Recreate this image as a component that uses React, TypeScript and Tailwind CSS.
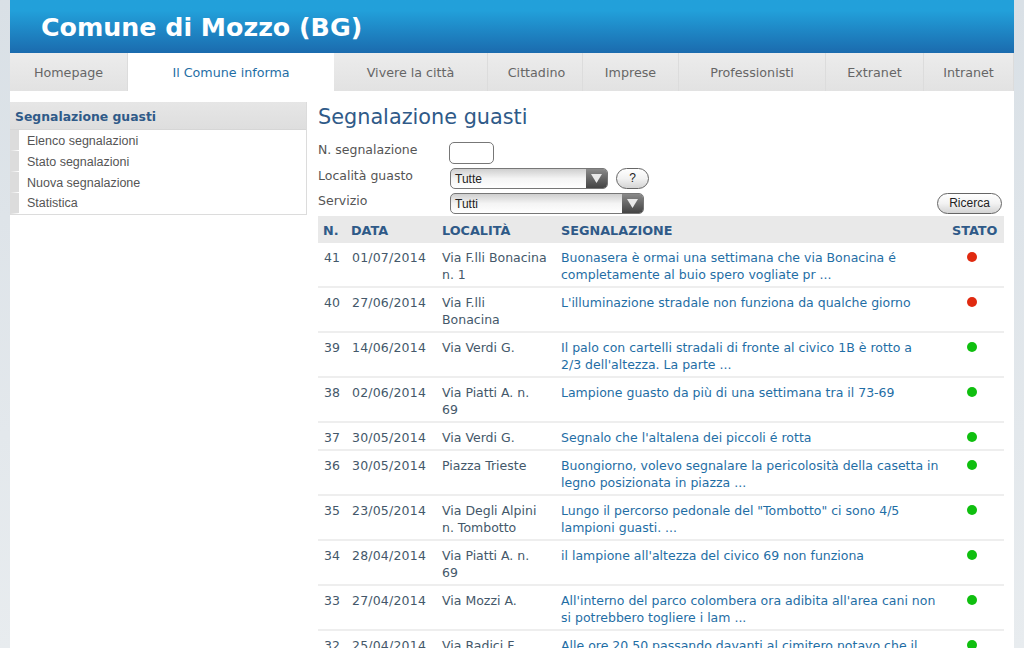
const verdana = "font-['DejaVu_Sans',Verdana,sans-serif]";

const tabs = [
  { label: "Homepage", width: "w-[118px]" },
  { label: "Il Comune informa", width: "w-[206px]", active: true },
  { label: "Vivere la città", width: "w-[154px]" },
  { label: "Cittadino", width: "w-[95px]", nudge: "pl-[3px]" },
  { label: "Imprese", width: "w-[96px]" },
  { label: "Professionisti", width: "w-[147px]" },
  { label: "Extranet", width: "w-[98px]" },
  { label: "Intranet", width: "w-[90px]" },
];

const menu = ["Elenco segnalazioni", "Stato segnalazioni", "Nuova segnalazione", "Statistica"];

const rows = [
  { n: 41, date: "01/07/2014", place: "Via F.lli Bonacina\nn. 1", text: "Buonasera è ormai una settimana che via Bonacina é\ncompletamente al buio spero vogliate pr ...", open: true },
  { n: 40, date: "27/06/2014", place: "Via F.lli\nBonacina", text: "L'illuminazione stradale non funziona da qualche giorno", open: true },
  { n: 39, date: "14/06/2014", place: "Via Verdi G.", text: "Il palo con cartelli stradali di fronte al civico 1B è rotto a\n2/3 dell'altezza. La parte ..." },
  { n: 38, date: "02/06/2014", place: "Via Piatti A. n.\n69", text: "Lampione guasto da più di una settimana tra il 73-69" },
  { n: 37, date: "30/05/2014", place: "Via Verdi G.", text: "Segnalo che l'altalena dei piccoli é rotta" },
  { n: 36, date: "30/05/2014", place: "Piazza Trieste", text: "Buongiorno, volevo segnalare la pericolosità della casetta in\nlegno posizionata in piazza ..." },
  { n: 35, date: "23/05/2014", place: "Via Degli Alpini\nn. Tombotto", text: "Lungo il percorso pedonale del \"Tombotto\" ci sono 4/5\nlampioni guasti. ..." },
  { n: 34, date: "28/04/2014", place: "Via Piatti A. n.\n69", text: "il lampione all'altezza del civico 69 non funziona" },
  { n: 33, date: "27/04/2014", place: "Via Mozzi A.", text: "All'interno del parco colombera ora adibita all'area cani non\nsi potrebbero togliere i lam ..." },
  { n: 32, date: "25/04/2014", place: "Via Radici F.", text: "Alle ore 20.50 passando davanti al cimitero notavo che il\nloculo ..." },
];

function FakeSelect({ value, width }: { value: string; width: string }) {
  return (
    <div className={`${width} flex h-[21px] overflow-hidden rounded-[5px] border border-[#777] bg-gradient-to-b from-[#cfcfcf] via-[#f4f4f4] to-[#fff] font-['Liberation_Sans',Arial,sans-serif] text-[12px] text-[#222]`}>
      <span className="flex-1 pl-[4px] leading-[20px]">{value}</span>
      <span className="flex w-[21px] items-center justify-center bg-gradient-to-b from-[#8a8a8a] to-[#444]">
        <svg width="11" height="9" viewBox="0 0 11 9">
          <path d="M0 0h11L5.5 9z" fill="#e8e8e8" />
        </svg>
      </span>
    </div>
  );
}

function PillButton({ label, width }: { label: string; width: string }) {
  return (
    <button className={`${width} h-[21px] rounded-full border border-[#666] bg-gradient-to-b from-[#fff] via-[#f2f2f2] to-[#d4d4d4] font-['Liberation_Sans',Arial,sans-serif] text-[12px] leading-[19px] text-[#222]`}>
      {label}
    </button>
  );
}

export default function App() {
  return (
    <div className={`${verdana} flex h-[648px] justify-center overflow-hidden bg-gradient-to-b from-[#d9e0e6] to-[#e8ecef]`}>
      <div className="h-[648px] w-[1004px] bg-white">
        <header className="flex h-[53px] items-center bg-gradient-to-b from-[#22a0da] from-20% to-[#1b6bae] pt-[3px] pl-[31px] text-[25.3px] font-bold text-white">
          Comune di Mozzo (BG)
        </header>

        <nav className="flex h-[38px] text-[12.7px] text-[#666]">
          {tabs.map((tab) => (
            <a
              key={tab.label}
              className={`${tab.width} ${tab.nudge ?? ""} flex items-center justify-center pt-[1px] ${
                tab.active
                  ? "bg-white text-[#1f6ea5]"
                  : "border-r border-[#dcdcdc] bg-gradient-to-b from-[#ececec] to-[#e2e2e2]"
              }`}
            >
              {tab.label}
            </a>
          ))}
        </nav>

        <div className="flex pt-[11px]">
          <aside className="h-[113px] w-[297px] shrink-0 border-r border-b border-[#dcdcdc]">
            <h3 className="flex h-[28px] items-center border-b border-[#d6d6d6] bg-gradient-to-b from-[#e6e6e6] to-[#dedede] pt-[3px] pl-[5px] text-[12.4px] font-bold text-[#2f5a88]">
              Segnalazione guasti
            </h3>
            <ul className="font-['Liberation_Sans',Arial,sans-serif] text-[12.5px] text-[#555]">
              {menu.map((item) => (
                <li key={item} className="h-[21px] border-b border-white border-l-[9px] border-l-[#dcdcdc] pl-[8px] leading-[21px] not-last:pt-[1px]">
                  {item}
                </li>
              ))}
            </ul>
          </aside>

          <main className="ml-[11px] w-[686px]">
            <h1 className="pt-[1px] text-[20.8px] leading-[29px] text-[#2f5a88]">Segnalazione guasti</h1>

            <form className="mt-[10px] text-[12.5px] text-[#555]">
              <div className="flex h-[22px] items-start">
                <label className="w-[131px] pt-[1px] leading-[14px]">N. segnalazione</label>
                <input className="h-[22px] w-[45px] rounded-[5px] border border-[#777] bg-white" />
              </div>
              <div className="mt-[4px] flex h-[21px] items-start">
                <label className="w-[132px] pt-[1px] leading-[14px]">Località guasto</label>
                <FakeSelect value="Tutte" width="w-[158px]" />
                <div className="ml-[8px]">
                  <PillButton label="?" width="w-[33px]" />
                </div>
              </div>
              <div className="mt-[4px] flex h-[21px] items-start">
                <label className="w-[132px] pt-[1px] leading-[14px]">Servizio</label>
                <FakeSelect value="Tutti" width="w-[194px]" />
                <div className="mr-[2px] ml-auto">
                  <PillButton label="Ricerca" width="w-[65px]" />
                </div>
              </div>
            </form>

            <table className="mt-[2px] w-[686px] table-fixed border-collapse text-[12.5px] leading-[17px]">
              <thead>
                <tr className="h-[27px] bg-[#e9e9e9] text-left text-[12.8px] font-bold text-[#2f5a88]">
                  <th className="w-[28px] pt-[1px] pl-[5px]">N.</th>
                  <th className="w-[91px] pt-[1px] pl-[5px]">DATA</th>
                  <th className="w-[119px] pt-[1px] pl-[5px]">LOCALITÀ</th>
                  <th className="w-[392px] pt-[1px] pl-[5px]">SEGNALAZIONE</th>
                  <th className="w-[56px] pt-[1px] pl-[4px]">STATO</th>
                </tr>
              </thead>
              <tbody>
                {rows.map((row) => (
                  <tr key={row.n} className="border-b-2 border-[#eeeeee] align-top whitespace-pre-line text-[#44586a]">
                    <td className="pt-[6px] pb-[3px] pl-[6px]">{row.n}</td>
                    <td className="pt-[6px] pb-[3px] pl-[6px] tracking-[0.2px]">{row.date}</td>
                    <td className="pt-[6px] pb-[3px] pl-[5px]">{row.place}</td>
                    <td className="pt-[6px] pr-[5px] pb-[3px] pl-[5px] text-[#1f6ea5]">{row.text}</td>
                    <td className="pt-[6px] pb-[3px]">
                      <span className={`mt-[3px] ml-[19px] block size-[10px] rounded-full ${row.open ? "bg-[#e02a10]" : "bg-[#0fbf0f]"}`} />
                    </td>
                  </tr>
                ))}
              </tbody>
            </table>
          </main>
        </div>
      </div>
    </div>
  );
}
